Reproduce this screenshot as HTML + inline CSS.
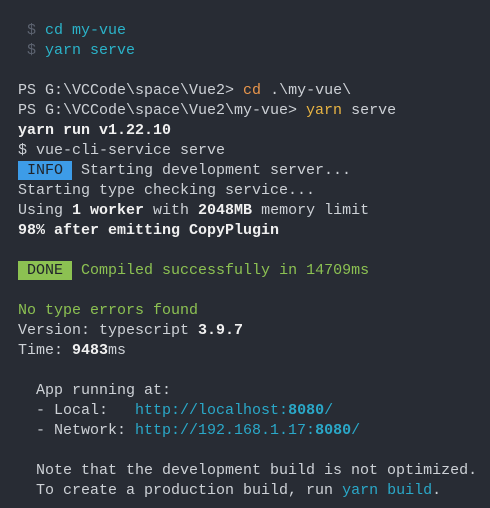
<!DOCTYPE html>
<html><head><meta charset="utf-8"><style>
html,body{margin:0;padding:0;background:#282c34;}
body{width:490px;height:508px;overflow:hidden;}
pre{margin:0;padding:21px 0 0 18px;font-family:"Liberation Mono","DejaVu Sans Mono",monospace;font-size:15px;line-height:20px;color:#cdd1d6;white-space:pre;}
.g{color:#5c6370}.c{color:#2bb3c9}.o{color:#e9964c}.y{color:#e8b443}
b{color:#f0f0f0;font-weight:bold}
.info,.done{display:inline-block;line-height:19px;vertical-align:top}
.info{background:#3d9ce8;color:#20242b}
.done{background:#8cc152;color:#20242b}
.gr{color:#8cc152}
.u{color:#2aa8c8}.u b{color:#2aa8c8}
</style></head><body><pre> <span class="g">$</span> <span class="c">cd my-vue</span>
 <span class="g">$</span> <span class="c">yarn serve</span>

PS G:\VCCode\space\Vue2&gt; <span class="o">cd</span> .\my-vue\
PS G:\VCCode\space\Vue2\my-vue&gt; <span class="y">yarn</span> serve
<b>yarn run v1.22.10</b>
$ vue-cli-service serve
<span class="info"> INFO </span> Starting development server...
Starting type checking service...
Using <b>1 worker</b> with <b>2048MB</b> memory limit
<b>98% after emitting CopyPlugin</b>

<span class="done"> DONE </span> <span class="gr">Compiled successfully in 14709ms</span>

<span class="gr">No type errors found</span>
Version: typescript <b>3.9.7</b>
Time: <b>9483</b>ms

  App running at:
  - Local:   <span class="u">http://localhost:<b>8080</b>/</span>
  - Network: <span class="u">http://192.168.1.17:<b>8080</b>/</span>

  Note that the development build is not optimized.
  To create a production build, run <span class="u">yarn build</span>.
</pre></body></html>
